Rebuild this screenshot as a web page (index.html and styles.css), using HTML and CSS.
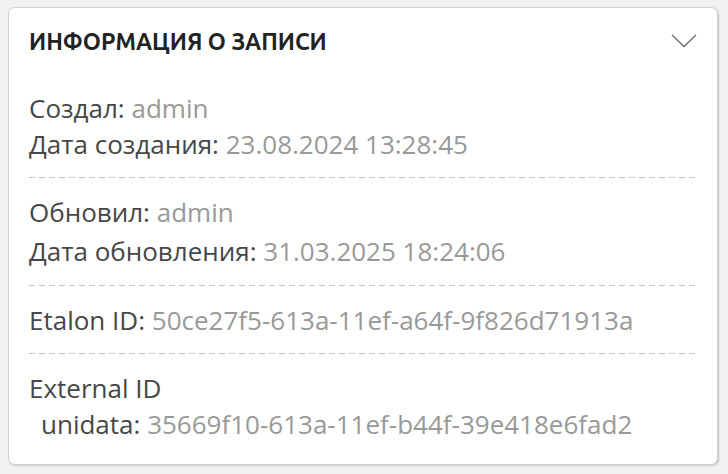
FILE: index.html
```html
<!DOCTYPE html>
<html lang="ru">
  <head>
    <meta charset="UTF-8" />
    <meta name="viewport" content="width=device-width, initial-scale=1.0" />
    <title>Информация о записи</title>
    <link rel="stylesheet" href="styles.css">
  </head>
  <body>
    <div id="root">
      <div class="info_card">
        <div class="info_header">
          <h2 class="info_title">ИНФОРМАЦИЯ О ЗАПИСИ</h2>
          <button class="collapse_btn" type="button">
            <svg width="26" height="14" viewBox="0 0 26 14">
              <path d="M1 1 L13 12.5 L25 1" fill="none" stroke="#6b6b6b" stroke-width="1.3" />
            </svg>
          </button>
        </div>
        <div class="info_section">
          <div class="info_row"><span class="label">Создал:</span> <span class="value">admin</span></div>
          <div class="info_row"><span class="label">Дата создания:</span> <span class="value">23.08.2024 13:28:45</span></div>
        </div>
        <div class="info_section info_section_wide">
          <div class="info_row"><span class="label">Обновил:</span> <span class="value">admin</span></div>
          <div class="info_row"><span class="label">Дата обновления:</span> <span class="value">31.03.2025 18:24:06</span></div>
        </div>
        <div class="info_section">
          <div class="info_row"><span class="label">Etalon ID:</span> <span class="value">50ce27f5-613a-11ef-a64f-9f826d71913a</span></div>
        </div>
        <div class="info_section">
          <div class="info_row"><span class="label">External ID</span></div>
          <div class="info_row sub_row"><span class="label">unidata:</span> <span class="value">35669f10-613a-11ef-b44f-39e418e6fad2</span></div>
        </div>
      </div>
    </div>
  </body>
</html>
```

FILE: styles.css
```css
body {
  margin: 0px;
  background-color: #f1f1f1;
}
#root {
  padding: 7px 10px 9px 8px;
  box-sizing: border-box;
  width: 100vw;
  height: 100vh;
}
.info_card {
  height: 100%;
  box-sizing: border-box;
  background-color: #ffffff;
  border: 1px solid #cfcfcf;
  border-radius: 7px;
  box-shadow: 1px 1px 2px rgba(0, 0, 0, 0.18);
  padding: 0px 20px 0px 20px;
  font-family: "Open Sans", sans-serif;
  font-size: 26px;
}
.info_header {
  display: flex;
  justify-content: space-between;
  align-items: center;
  height: 66px;
}
.info_title {
  margin: 0px;
  font-family: "Ubuntu", "Noto Sans", sans-serif;
  font-weight: bold;
  font-size: 23px;
  color: #222222;
}
.collapse_btn {
  border: none;
  background: none;
  padding: 0px;
  margin-right: 0px;
  display: flex;
}
.info_section {
  display: flex;
  flex-direction: column;
  padding: 16px 0px 16px 0px;
  background-image: linear-gradient(to right, #c4c4c4 6px, transparent 6px);
  background-size: 10px 1px;
  background-repeat: repeat-x;
  background-position: left bottom;
}
.info_section_wide {
  gap: 3px;
  padding-bottom: 17px;
}
.info_section:last-child {
  background-image: none;
}
.info_row {
  line-height: 36px;
  white-space: nowrap;
}
.sub_row {
  padding-left: 12px;
}
.label {
  color: #474747;
}
.value {
  color: #999999;
}
```
